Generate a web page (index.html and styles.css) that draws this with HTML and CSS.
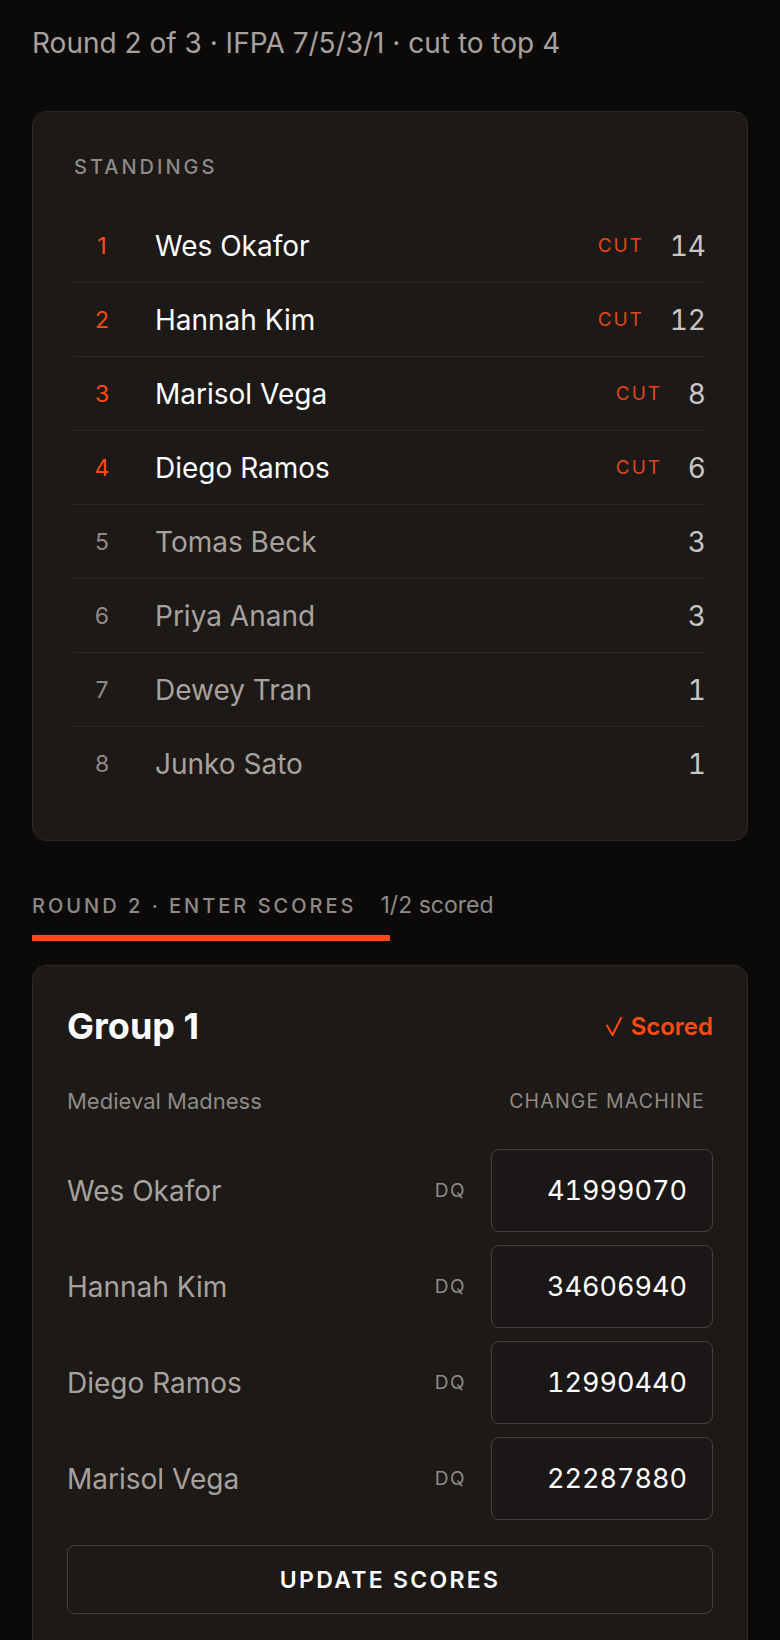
FILE: index.html
```html
<!DOCTYPE html>
<html lang="en">
<head>
<meta charset="utf-8">
<title>Round 2</title>
<link rel="stylesheet" href="styles.css">
</head>
<body>
<main class="page">
  <p class="meta">Round 2 of 3 · IFPA 7/5/3/1 · cut to top 4</p>

  <section class="card standings">
    <h2 class="label">Standings</h2>
    <ol class="table">
      <li class="row top"><span class="rank">1</span><span class="name">Wes Okafor</span><span class="cut">CUT</span><span class="pts">14</span></li>
      <li class="row top"><span class="rank">2</span><span class="name">Hannah Kim</span><span class="cut">CUT</span><span class="pts">12</span></li>
      <li class="row top"><span class="rank">3</span><span class="name">Marisol Vega</span><span class="cut">CUT</span><span class="pts">8</span></li>
      <li class="row top"><span class="rank">4</span><span class="name">Diego Ramos</span><span class="cut">CUT</span><span class="pts">6</span></li>
      <li class="row"><span class="rank">5</span><span class="name">Tomas Beck</span><span class="pts">3</span></li>
      <li class="row"><span class="rank">6</span><span class="name">Priya Anand</span><span class="pts">3</span></li>
      <li class="row"><span class="rank">7</span><span class="name">Dewey Tran</span><span class="pts">1</span></li>
      <li class="row"><span class="rank">8</span><span class="name">Junko Sato</span><span class="pts">1</span></li>
    </ol>
  </section>

  <section class="round">
    <div class="round-head">
      <h2 class="label">Round 2 · Enter scores</h2>
      <span class="count">1/2 scored</span>
    </div>
    <div class="progress"><div class="bar" style="width:50%"></div></div>
  </section>

  <section class="card group">
    <div class="group-head">
      <h3 class="group-title">Group 1</h3>
      <span class="status"><svg class="check" viewBox="0 0 16 19" aria-hidden="true"><polyline points="1,8.5 6.5,18 15,1"/></svg>Scored</span>
    </div>
    <div class="machine">
      <span class="machine-name">Medieval Madness</span>
      <button class="link-btn">Change machine</button>
    </div>
    <div class="entries">
      <div class="entry"><span class="player">Wes Okafor</span><span class="dq">DQ</span><input class="score" value="41999070"></div>
      <div class="entry"><span class="player">Hannah Kim</span><span class="dq">DQ</span><input class="score" value="34606940"></div>
      <div class="entry"><span class="player">Diego Ramos</span><span class="dq">DQ</span><input class="score" value="12990440"></div>
      <div class="entry"><span class="player">Marisol Vega</span><span class="dq">DQ</span><input class="score" value="22287880"></div>
    </div>
    <button class="submit">Update scores</button>
  </section>
</main>
</body>
</html>
```

FILE: styles.css
```css
* { box-sizing: border-box; }

html, body {
  margin: 0;
  background: #0c0a09;
}

body {
  font-family: Inter, "Noto Sans", "Liberation Sans", sans-serif;
  color: #a8a29e;
}

.page {
  padding: 24px 32px 0;
}

.meta {
  margin: 0;
  font-size: 28px;
  line-height: 38px;
  color: #a8a29e;
}

.card {
  background: #1c1917;
  border: 1px solid #2c2826;
  border-radius: 14px;
}

.standings {
  margin-top: 49px;
  padding: 41px 41px 40px;
}

.label {
  margin: 0;
  font-size: 20px;
  font-weight: 500;
  letter-spacing: 0.15em;
  text-transform: uppercase;
  color: #8f8a86;
  line-height: 28px;
}

.table {
  list-style: none;
  margin: 28px 0 0;
  padding: 0;
}

.row {
  display: flex;
  align-items: center;
  height: 74px;
  border-bottom: 1px solid #2c2826;
  font-size: 28px;
}

.row:last-child {
  border-bottom: none;
  height: 73px;
}

.rank {
  width: 56px;
  text-align: center;
  font-size: 23px;
  color: #8f8a86;
}

.row.top .rank { color: #ff4a12; }

.name {
  flex: 1;
  margin-left: 25px;
  color: #a8a29e;
}

.row.top .name { color: #ffffff; }

.cut {
  font-size: 19px;
  letter-spacing: 0.1em;
  color: #e0461a;
  margin-right: 26px;
}

.pts {
  color: #c9c5c2;
  font-variant-numeric: tabular-nums;
}

.round {
  margin-top: 50px;
}

.round-head {
  display: flex;
  align-items: baseline;
  gap: 24px;
}

.count {
  font-size: 23px;
  color: #8f8a86;
}

.progress {
  margin-top: 15px;
  height: 6px;
}

.bar {
  height: 6px;
  background: #ff4a12;
  border-radius: 1px;
}

.group {
  margin-top: 24px;
  padding: 34px 34px 40px;
}

.group-head {
  display: flex;
  justify-content: space-between;
  align-items: center;
}

.group-title {
  margin: 0;
  font-size: 36px;
  font-weight: 700;
  color: #ffffff;
  line-height: 52px;
}

.status {
  display: flex;
  align-items: center;
  gap: 9px;
  font-size: 24px;
  font-weight: 600;
  color: #ff4a12;
}

.check {
  width: 16px;
  height: 19px;
  fill: none;
  stroke: #ff4a12;
  stroke-width: 2;
  stroke-linecap: round;
  stroke-linejoin: round;
}

.machine {
  display: flex;
  justify-content: space-between;
  align-items: center;
  margin-top: 35px;
  line-height: 28px;
}

.machine-name {
  font-size: 22px;
  color: #8f8a86;
}

.link-btn {
  background: none;
  border: none;
  padding: 0 8px 0 0;
  font-family: inherit;
  font-size: 19.5px;
  letter-spacing: 0.06em;
  text-transform: uppercase;
  color: #8f8a86;
  cursor: pointer;
}

.entries {
  display: flex;
  flex-direction: column;
  gap: 13px;
  margin-top: 34px;
}

.entry {
  display: flex;
  align-items: center;
}

.player {
  flex: 1;
  font-size: 28px;
  color: #a8a29e;
}

.dq {
  font-size: 19px;
  letter-spacing: 0.08em;
  color: #8f8a86;
  margin-right: 25px;
}

.score {
  width: 222px;
  height: 83px;
  padding: 0 25px;
  text-align: right;
  font-family: inherit;
  font-size: 27px;
  font-variant-numeric: tabular-nums;
  color: #ffffff;
  background: #1a1716;
  border: 1px solid #46413e;
  border-radius: 8px;
  outline: none;
}

.submit {
  display: block;
  width: 100%;
  height: 69px;
  margin-top: 25px;
  background: transparent;
  border: 1px solid #46413e;
  border-radius: 8px;
  font-family: inherit;
  font-size: 23px;
  font-weight: 600;
  letter-spacing: 0.1em;
  text-transform: uppercase;
  color: #ffffff;
  cursor: pointer;
}
```
